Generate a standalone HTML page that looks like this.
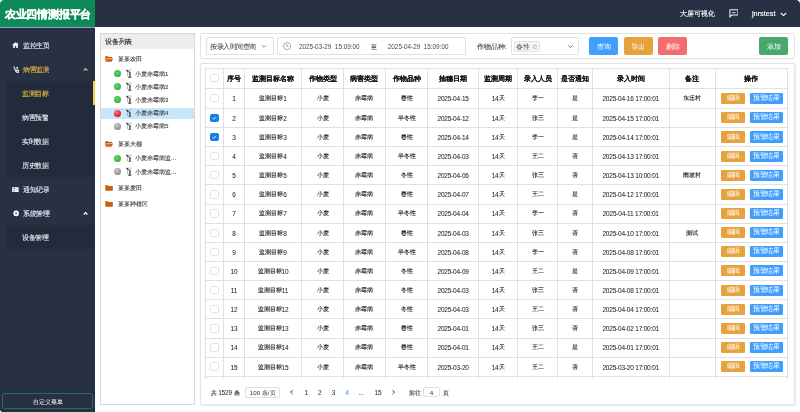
<!DOCTYPE html>
<html><head><meta charset="utf-8">
<style>
*{margin:0;padding:0;box-sizing:border-box}
html,body{width:800px;height:412px;overflow:hidden;background:#fff;-webkit-font-smoothing:antialiased;will-change:transform;font-family:"Liberation Sans",sans-serif;position:relative}
.a{position:absolute}
#hdr{left:0;top:0;width:800px;height:26.5px;background:#283044}
#logo{left:0;top:0;width:95px;height:26.5px;background:#0c8a5a;color:#fff;font-weight:bold;font-size:10.9px;line-height:28.2px;padding-left:4.8px;letter-spacing:-0.2px;white-space:nowrap;-webkit-text-stroke:0.3px #fff}
#side{left:0;top:27.5px;width:94.6px;height:385px;background:#283044}
.hline{left:0;top:26.5px;width:95px;height:1px;background:#9ca1b4}
.mi{position:absolute;left:0;width:94.6px;height:24px;line-height:24px;font-size:6.4px;color:#e3e6ee;white-space:nowrap}
.z{font-style:normal;display:inline-block;transform:scale(.25);white-space:nowrap;line-height:1}
.zl{position:absolute;transform:scale(.25);transform-origin:0 0;white-space:nowrap;font-style:normal}
.mi .t{position:absolute;left:23px;top:0;font-size:26.2px;line-height:96px;transform:scale(.25);transform-origin:0 0;-webkit-text-stroke:0.5px currentColor}
.mi.sub .t{left:22px}
.mi.y{color:#e3b944}
.subbg{position:absolute;left:6px;width:88.6px;background:#222a3c}
.chev{position:absolute;left:82.5px;top:9.1px;width:5.2px;height:5.2px}
.ico{position:absolute;left:12.5px;top:8.8px;width:6.5px;height:6.5px}
#cust{left:2px;top:393px;width:91px;height:16px;border:1px solid #1d7258;border-radius:2.5px;color:#fff;display:flex;align-items:center;justify-content:center;padding-top:1.6px}

/* device panel */
#dev{left:100.2px;top:33.2px;width:94.9px;height:371.8px;border:0.8px solid #d8d8d8;background:#fff}
#devh{left:0;top:0;width:100%;height:15.3px;background:#ededed}
.tn{position:absolute;left:0;width:100%;height:12px;font-size:6.1px;color:#3c3c3c;-webkit-text-stroke:0.1px #3c3c3c;white-space:nowrap}
.tn .t{position:absolute;top:0;line-height:48px;font-size:24.4px;-webkit-text-stroke:0.4px #3c3c3c;transform:scale(.25);transform-origin:0 0}
.dot{position:absolute;width:7.1px;height:7.1px;border-radius:50%;left:14.1px;top:2.45px}
.g{background:radial-gradient(circle at 45% 40%,#62d86c 0%,#3cbf48 50%,#22a030 85%,#1a7f26 100%)}
.r{background:radial-gradient(circle at 40% 35%,#ff8080 0%,#e8232b 55%,#b80f17 100%)}
.gr{background:radial-gradient(circle at 40% 35%,#cfcfcf 0%,#9a9a9a 55%,#777 100%)}
.sens{position:absolute;left:25.7px;top:1.6px;width:6px;height:8.7px}
.fold{position:absolute;left:4.6px;top:3px;width:8.4px;height:6px}

/* toolbar */
#tb{left:200.2px;top:33.3px;width:594.9px;height:25.8px;border:0.8px solid #e2e2e2;border-radius:1.5px;background:#fff}
.inp{position:absolute;border:0.7px solid #e0e0e0;border-radius:2px;background:#fff;font-size:6.4px;color:#606266;white-space:nowrap}
.btn2{position:absolute;top:36.7px;height:18px;width:29.3px;border-radius:2px;color:#fff;display:flex;align-items:center;justify-content:center;padding-top:1.3px}
.btn2 .z{font-size:27px}

/* table panel */
#tp{left:200.2px;top:63.3px;width:594.9px;height:341.6px;border:0.8px solid #e4e4e4;border-radius:2px;background:#fff;box-shadow:0.5px 0.5px 1.5px rgba(0,0,0,0.08)}
.hl{position:absolute;height:0.8px;background:#e0e0e0}
.vl{position:absolute;width:0.8px;background:#e0e0e0}
.th{position:absolute;text-align:center;font-weight:bold;font-size:6.55px;color:#111;-webkit-text-stroke:0.08px #111;white-space:nowrap;display:flex;align-items:center;justify-content:center;padding-top:1.9px}
.td{position:absolute;text-align:center;font-size:6px;color:#1e1e1e;-webkit-text-stroke:0.12px #1e1e1e;white-space:nowrap;display:flex;align-items:center;justify-content:center;padding-top:0.8px}
.n{font-weight:normal;font-size:6.5px;letter-spacing:-0.2px;-webkit-text-stroke:0.04px #1e1e1e}
.cb{position:absolute;width:8.3px;height:8.3px;border:0.7px solid #e2e2e2;border-radius:1.6px;background:#fff}
.cb.on{background:#1a7ef2;border-color:#1a7ef2}
.cb svg{display:block}
.btn{position:absolute;height:11.1px;color:#fff;border-radius:1.3px;display:flex;align-items:center;justify-content:center;padding-bottom:0.8px}
.btn .z{font-size:26px}
.be{width:23.7px;background:#e6a23c}
.bw{width:33.5px;background:#409eff}

/* pagination */
.pg{position:absolute;font-size:6.1px;color:#303133;-webkit-text-stroke:0.1px #303133;white-space:nowrap;line-height:10px}
</style></head><body>
<div id="hdr" class="a"></div>
<div id="logo" class="a">农业四情测报平台</div>
<div class="a hline"></div>
<div id="side" class="a"></div>
<div class="a" style="left:679.7px;top:8.8px;font-size:6.9px;color:#fff;line-height:10px;white-space:nowrap;-webkit-text-stroke:0.1px #fff">大屏可视化</div>
<svg class="a" style="left:728.6px;top:9.2px" width="9.6" height="8.6" viewBox="0 0 19 17"><path d="M3 1.5 H16.5 Q17.8 1.5 17.8 2.8 V10.7 Q17.8 12 16.5 12 H5.5 L1.8 15.6 V2.8 Q1.8 1.5 3 1.5 Z" fill="none" stroke="#f0f0f0" stroke-width="2"/><path d="M6.2 7 H13" stroke="#c8ccd4" stroke-width="2.2"/></svg>
<div class="a" style="left:752px;top:8.9px;font-size:7.3px;color:#fff;line-height:10px;white-space:nowrap;-webkit-text-stroke:0.15px #fff">jnrstest</div>
<svg class="a" style="left:779.5px;top:11.6px" width="7" height="4.8" viewBox="0 0 13 9"><path d="M1.5 1.5 L6.5 6.8 L11.5 1.5" fill="none" stroke="#fff" stroke-width="2.2"/></svg>

<!-- sidebar menu -->
<div class="subbg" style="top:81.2px;height:95.9px"></div>
<div class="subbg" style="top:225.2px;height:24.2px"></div>
<div class="a" style="left:93.3px;top:81px;width:1.7px;height:23.8px;background:#f3d443"></div>

<div class="mi" style="top:33.8px"><svg class="a" style="left:12.2px;top:8.5px" width="7" height="6" viewBox="0 0 14 12"><path d="M7 0.3 L13.8 6.2 H11.6 V11.8 H8.4 V8.2 H5.6 V11.8 H2.4 V6.2 H0.2 Z M9.8 1.2 H11.6 V3.6 L9.8 2.2 Z" fill="#fff"/></svg><span class="t">监控主页</span></div>
<div class="mi y" style="top:57.8px"><svg class="a" style="left:12.5px;top:8.1px" width="6.5" height="7" viewBox="0 0 13 14"><path d="M0.6 1.6 L2.6 0.4 L7.2 10.8 L5 12 Z" fill="#e8e8e8"/><circle cx="8.4" cy="3.4" r="1.7" fill="#fff"/><path d="M7 4.6 L8 9" stroke="#ccc" stroke-width="1.2"/><rect x="6.6" y="7.4" width="6" height="6.2" fill="#fff"/><circle cx="9.4" cy="10.4" r="1.3" fill="#283044"/></svg><span class="t">病害监测</span><svg class="chev" viewBox="0 0 10 10"><path d="M1.5 6.8 L5 3.2 L8.5 6.8" fill="none" stroke="#e3b944" stroke-width="2.4"/></svg></div>
<div class="mi sub y" style="top:81.8px"><span class="t">监测目标</span></div>
<div class="mi sub" style="top:105.8px"><span class="t">病害预警</span></div>
<div class="mi sub" style="top:129.8px"><span class="t">实时数据</span></div>
<div class="mi sub" style="top:153.8px"><span class="t">历史数据</span></div>
<div class="mi" style="top:177.8px"><svg class="a" style="left:12.3px;top:8.9px" width="6.8" height="5.3" viewBox="0 0 14 11"><rect x="0.3" y="0.3" width="13.4" height="10.4" rx="0.6" fill="#fff"/><circle cx="4.6" cy="3.8" r="1.5" fill="#283044"/><path d="M2.2 8.6 Q4.6 5.6 7 8.6 Z" fill="#283044"/><ellipse cx="10.4" cy="5.4" rx="1.1" ry="1.9" fill="#8a90a0"/></svg><span class="t">通知记录</span></div>
<div class="mi" style="top:201.8px"><svg class="a" style="left:12.8px;top:8.3px" width="6.3" height="6.7" viewBox="0 0 12.6 13.4"><path d="M6.3 0.2 L8 1.8 L10.6 1.5 L10.9 4.1 L12.4 6.7 L10.9 9.3 L10.6 11.9 L8 11.6 L6.3 13.2 L4.6 11.6 L2 11.9 L1.7 9.3 L0.2 6.7 L1.7 4.1 L2 1.5 L4.6 1.8 Z" fill="#fff"/><circle cx="6.3" cy="6.7" r="2" fill="#5a6070"/></svg><span class="t">系统管理</span><svg class="chev" viewBox="0 0 10 10"><path d="M1.5 6.8 L5 3.2 L8.5 6.8" fill="none" stroke="#fff" stroke-width="2.4"/></svg></div>
<div class="mi sub" style="top:225.8px"><span class="t">设备管理</span></div>
<div id="cust" class="a"><i class="z" style="font-size:24.2px">自定义菜单</i></div>

<!-- device panel -->
<div id="dev" class="a">
  <div id="devh" class="a"><span class="zl" style="left:4.2px;top:0;font-size:26.8px;line-height:61.2px;color:#222;-webkit-text-stroke:0.4px #222">设备列表</span></div>
</div>
<div class="tn" style="left:100.2px;width:94px;top:53.3px"><svg class="fold" viewBox="0 0 17 12"><path d="M0.5 1.2 Q0.5 0.3 1.4 0.3 H5.8 L7.2 1.8 H13.6 Q14.5 1.8 14.5 2.7 V4.2 H3.6 L0.5 11 Z" fill="#bf5208"/><path d="M3.9 5 H16.6 L13.4 11.6 H0.8 Z" fill="#d2661a"/></svg><span class="t" style="left:17.6px;font-size:24.4px">某某农田</span></div>
<div class="tn" style="left:100.2px;width:94px;top:67.6px"><div class="dot g"></div><svg class="sens" viewBox="0 0 12 17"><path d="M4 2 H11.5" stroke="#aaa" stroke-width="1.6"/><path d="M1 1.6 L2.5 3.2 L5 6" stroke="#111" stroke-width="2.2" fill="none"/><path d="M3.2 6.5 Q1.2 10 3.4 14" stroke="#999" stroke-width="1.5" fill="none"/><path d="M7.8 5.5 V14.5" stroke="#111" stroke-width="2.2"/><path d="M4.5 16 H10.5" stroke="#111" stroke-width="2.2"/></svg><span class="t" style="left:34.7px">小麦赤霉病1</span></div>
<div class="tn" style="left:100.2px;width:94px;top:80.8px"><div class="dot g"></div><svg class="sens" viewBox="0 0 12 17"><path d="M4 2 H11.5" stroke="#aaa" stroke-width="1.6"/><path d="M1 1.6 L2.5 3.2 L5 6" stroke="#111" stroke-width="2.2" fill="none"/><path d="M3.2 6.5 Q1.2 10 3.4 14" stroke="#999" stroke-width="1.5" fill="none"/><path d="M7.8 5.5 V14.5" stroke="#111" stroke-width="2.2"/><path d="M4.5 16 H10.5" stroke="#111" stroke-width="2.2"/></svg><span class="t" style="left:34.7px">小麦赤霉病2</span></div>
<div class="tn" style="left:100.2px;width:94px;top:93.9px"><div class="dot g"></div><svg class="sens" viewBox="0 0 12 17"><path d="M4 2 H11.5" stroke="#aaa" stroke-width="1.6"/><path d="M1 1.6 L2.5 3.2 L5 6" stroke="#111" stroke-width="2.2" fill="none"/><path d="M3.2 6.5 Q1.2 10 3.4 14" stroke="#999" stroke-width="1.5" fill="none"/><path d="M7.8 5.5 V14.5" stroke="#111" stroke-width="2.2"/><path d="M4.5 16 H10.5" stroke="#111" stroke-width="2.2"/></svg><span class="t" style="left:34.7px">小麦赤霉病3</span></div>
<div class="a" style="left:100.9px;top:107.6px;width:93px;height:11.5px;background:#c6e7fa"></div>
<div class="tn" style="left:100.2px;width:94px;top:107.2px"><div class="dot r"></div><svg class="sens" viewBox="0 0 12 17"><path d="M4 2 H11.5" stroke="#aaa" stroke-width="1.6"/><path d="M1 1.6 L2.5 3.2 L5 6" stroke="#111" stroke-width="2.2" fill="none"/><path d="M3.2 6.5 Q1.2 10 3.4 14" stroke="#999" stroke-width="1.5" fill="none"/><path d="M7.8 5.5 V14.5" stroke="#111" stroke-width="2.2"/><path d="M4.5 16 H10.5" stroke="#111" stroke-width="2.2"/></svg><span class="t" style="left:34.7px">小麦赤霉病4</span></div>
<div class="tn" style="left:100.2px;width:94px;top:120.2px"><div class="dot gr"></div><svg class="sens" viewBox="0 0 12 17"><path d="M4 2 H11.5" stroke="#aaa" stroke-width="1.6"/><path d="M1 1.6 L2.5 3.2 L5 6" stroke="#111" stroke-width="2.2" fill="none"/><path d="M3.2 6.5 Q1.2 10 3.4 14" stroke="#999" stroke-width="1.5" fill="none"/><path d="M7.8 5.5 V14.5" stroke="#111" stroke-width="2.2"/><path d="M4.5 16 H10.5" stroke="#111" stroke-width="2.2"/></svg><span class="t" style="left:34.7px">小麦赤霉病5</span></div>
<div class="tn" style="left:100.2px;width:94px;top:138px"><svg class="fold" viewBox="0 0 17 12"><path d="M0.5 1.2 Q0.5 0.3 1.4 0.3 H5.8 L7.2 1.8 H13.6 Q14.5 1.8 14.5 2.7 V4.2 H3.6 L0.5 11 Z" fill="#bf5208"/><path d="M3.9 5 H16.6 L13.4 11.6 H0.8 Z" fill="#d2661a"/></svg><span class="t" style="left:17.6px;font-size:24.4px">某某大棚</span></div>
<div class="tn" style="left:100.2px;width:94px;top:152.1px"><div class="dot g"></div><svg class="sens" viewBox="0 0 12 17"><path d="M4 2 H11.5" stroke="#aaa" stroke-width="1.6"/><path d="M1 1.6 L2.5 3.2 L5 6" stroke="#111" stroke-width="2.2" fill="none"/><path d="M3.2 6.5 Q1.2 10 3.4 14" stroke="#999" stroke-width="1.5" fill="none"/><path d="M7.8 5.5 V14.5" stroke="#111" stroke-width="2.2"/><path d="M4.5 16 H10.5" stroke="#111" stroke-width="2.2"/></svg><span class="t" style="left:34.7px">小麦赤霉病监...</span></div>
<div class="tn" style="left:100.2px;width:94px;top:165.5px"><div class="dot gr"></div><svg class="sens" viewBox="0 0 12 17"><path d="M4 2 H11.5" stroke="#aaa" stroke-width="1.6"/><path d="M1 1.6 L2.5 3.2 L5 6" stroke="#111" stroke-width="2.2" fill="none"/><path d="M3.2 6.5 Q1.2 10 3.4 14" stroke="#999" stroke-width="1.5" fill="none"/><path d="M7.8 5.5 V14.5" stroke="#111" stroke-width="2.2"/><path d="M4.5 16 H10.5" stroke="#111" stroke-width="2.2"/></svg><span class="t" style="left:34.7px">小麦赤霉病监...</span></div>
<div class="tn" style="left:100.2px;width:94px;top:182px"><svg class="fold" viewBox="0 0 17 12"><path d="M0.6 1.2 Q0.6 0.3 1.5 0.3 H6 L7.5 1.9 H15 Q15.9 1.9 15.9 2.8 V10.8 Q15.9 11.7 15 11.7 H1.5 Q0.6 11.7 0.6 10.8 Z" fill="#cc5e0c"/></svg><span class="t" style="left:17.6px;font-size:24.4px">某某麦田</span></div>
<div class="tn" style="left:100.2px;width:94px;top:198px"><svg class="fold" viewBox="0 0 17 12"><path d="M0.6 1.2 Q0.6 0.3 1.5 0.3 H6 L7.5 1.9 H15 Q15.9 1.9 15.9 2.8 V10.8 Q15.9 11.7 15 11.7 H1.5 Q0.6 11.7 0.6 10.8 Z" fill="#cc5e0c"/></svg><span class="t" style="left:17.6px;font-size:24.4px">某某种植区</span></div>

<!-- toolbar -->
<div id="tb" class="a"></div>
<div class="inp" style="left:205.6px;top:36.5px;width:68.2px;height:18px"><span class="zl" style="left:3.9px;top:0;line-height:70px;font-size:26.4px;color:#4a4a4a;-webkit-text-stroke:0.3px #4a4a4a">按录入时间查询</span><svg class="a" style="left:55.9px;top:7.6px" width="4.2" height="2.8" viewBox="0 0 8 5"><path d="M0.5 0.5 L4 4 L7.5 0.5" fill="none" stroke="#555" stroke-width="1.3"/></svg></div>
<div class="inp" style="left:277.3px;top:36.5px;width:188.5px;height:18.1px">
  <svg class="a" style="left:4.9px;top:4.8px" width="8.2" height="8.2" viewBox="0 0 16 16"><circle cx="8" cy="8" r="7" fill="none" stroke="#8a8d94" stroke-width="1.4"/><path d="M7.6 3.8 V8.4 H11" fill="none" stroke="#8a8d94" stroke-width="1.5"/></svg>
  <span class="a" style="left:20.6px;top:0;line-height:17px;font-size:6.35px;color:#4a4a4a">2025-03-29&nbsp; 15:09:00</span>
  <span class="a" style="left:92.4px;top:0;line-height:17px;font-size:6.2px;color:#444;-webkit-text-stroke:0.1px #444">至</span>
  <span class="a" style="left:109.5px;top:0;line-height:17px;font-size:6.35px;color:#4a4a4a">2025-04-29&nbsp; 15:09:00</span>
</div>
<div class="a" style="left:476.5px;top:41.5px;font-size:6.5px;line-height:10px;color:#444;white-space:nowrap;-webkit-text-stroke:0.08px #444">作物品种:</div>
<div class="inp" style="left:511.3px;top:36.5px;width:67.4px;height:18.1px">
  <div class="a" style="left:2.2px;top:3.8px;width:25.9px;height:11px;background:#f6f6f7;border:0.6px solid #e2e2e4;border-radius:1.5px"></div>
  <span class="zl" style="left:4px;top:0.6px;line-height:68px;font-size:27px;color:#555">春性</span>
  <svg class="a" style="left:19.6px;top:6.6px" width="5.6" height="5.6" viewBox="0 0 10 10"><circle cx="5" cy="5" r="4.6" fill="#cdd1d8"/><path d="M3.2 3.2 L6.8 6.8 M6.8 3.2 L3.2 6.8" stroke="#fff" stroke-width="1.1"/></svg>
  <svg class="a" style="left:55.4px;top:7.4px" width="5.2" height="3.2" viewBox="0 0 8 5"><path d="M0.5 0.5 L4 4 L7.5 0.5" fill="none" stroke="#555" stroke-width="1.3"/></svg>
</div>
<div class="btn2" style="left:589px;background:#409eff"><i class="z">查询</i></div>
<div class="btn2" style="left:623.6px;background:#e6a23c"><i class="z">导出</i></div>
<div class="btn2" style="left:658px;background:#f56c6c"><i class="z">删除</i></div>
<div class="btn2" style="left:759.1px;background:#46a96b"><i class="z">添加</i></div>

<!-- table panel -->
<div id="tp" class="a"></div>
<div class="hl" style="left:205.6px;top:67.85px;width:581.9px"></div>
<div class="hl" style="left:205.6px;top:87.9px;width:581.9px"></div>
<div class="hl" style="left:205.6px;top:107.85px;width:581.9px"></div>
<div class="hl" style="left:205.6px;top:126.99px;width:581.9px"></div>
<div class="hl" style="left:205.6px;top:146.13px;width:581.9px"></div>
<div class="hl" style="left:205.6px;top:165.27px;width:581.9px"></div>
<div class="hl" style="left:205.6px;top:184.41px;width:581.9px"></div>
<div class="hl" style="left:205.6px;top:203.55px;width:581.9px"></div>
<div class="hl" style="left:205.6px;top:222.69px;width:581.9px"></div>
<div class="hl" style="left:205.6px;top:241.83px;width:581.9px"></div>
<div class="hl" style="left:205.6px;top:260.97px;width:581.9px"></div>
<div class="hl" style="left:205.6px;top:280.11px;width:581.9px"></div>
<div class="hl" style="left:205.6px;top:299.25px;width:581.9px"></div>
<div class="hl" style="left:205.6px;top:318.39px;width:581.9px"></div>
<div class="hl" style="left:205.6px;top:337.53px;width:581.9px"></div>
<div class="hl" style="left:205.6px;top:356.67px;width:581.9px"></div>
<div class="hl" style="left:205.6px;top:375.81px;width:581.9px"></div>
<div class="vl" style="left:205.2px;top:67.85px;height:311.15px"></div>
<div class="vl" style="left:223.2px;top:67.85px;height:311.15px"></div>
<div class="vl" style="left:243.8px;top:67.85px;height:311.15px"></div>
<div class="vl" style="left:301.35px;top:67.85px;height:311.15px"></div>
<div class="vl" style="left:342.85px;top:67.85px;height:311.15px"></div>
<div class="vl" style="left:385.1px;top:67.85px;height:311.15px"></div>
<div class="vl" style="left:427.1px;top:67.85px;height:311.15px"></div>
<div class="vl" style="left:478.35px;top:67.85px;height:311.15px"></div>
<div class="vl" style="left:517.1px;top:67.85px;height:311.15px"></div>
<div class="vl" style="left:557.1px;top:67.85px;height:311.15px"></div>
<div class="vl" style="left:591.5px;top:67.85px;height:311.15px"></div>
<div class="vl" style="left:669.1px;top:67.85px;height:311.15px"></div>
<div class="vl" style="left:715px;top:67.85px;height:311.15px"></div>
<div class="vl" style="left:787.1px;top:67.85px;height:311.15px"></div>
<div class="cb" style="left:210.45px;top:74.12px"></div>
<div class="th" style="left:223.6px;top:68.25px;width:20.6px;height:20.05px">序号</div>
<div class="th" style="left:244.2px;top:68.25px;width:57.55px;height:20.05px">监测目标名称</div>
<div class="th" style="left:301.75px;top:68.25px;width:41.5px;height:20.05px">作物类型</div>
<div class="th" style="left:343.25px;top:68.25px;width:42.25px;height:20.05px">病害类型</div>
<div class="th" style="left:385.5px;top:68.25px;width:42px;height:20.05px">作物品种</div>
<div class="th" style="left:427.5px;top:68.25px;width:51.25px;height:20.05px">抽穗日期</div>
<div class="th" style="left:478.75px;top:68.25px;width:38.75px;height:20.05px">监测周期</div>
<div class="th" style="left:517.5px;top:68.25px;width:40px;height:20.05px">录入人员</div>
<div class="th" style="left:557.5px;top:68.25px;width:34.4px;height:20.05px">是否通知</div>
<div class="th" style="left:591.9px;top:68.25px;width:77.6px;height:20.05px">录入时间</div>
<div class="th" style="left:669.5px;top:68.25px;width:45.9px;height:20.05px">备注</div>
<div class="th" style="left:715.4px;top:68.25px;width:72.1px;height:20.05px">操作</div>
<div class="cb" style="left:210.45px;top:94.12px"></div>
<div class="td" style="left:223.6px;top:88.3px;width:20.6px;height:19.95px"><b class="n">1</b></div>
<div class="td" style="left:244.2px;top:88.3px;width:57.55px;height:19.95px">监测目标<b class="n">1</b></div>
<div class="td" style="left:301.75px;top:88.3px;width:41.5px;height:19.95px">小麦</div>
<div class="td" style="left:343.25px;top:88.3px;width:42.25px;height:19.95px">赤霉病</div>
<div class="td" style="left:385.5px;top:88.3px;width:42px;height:19.95px">春性</div>
<div class="td" style="left:427.5px;top:88.3px;width:51.25px;height:19.95px"><b class="n">2025-04-15</b></div>
<div class="td" style="left:478.75px;top:88.3px;width:38.75px;height:19.95px"><b class="n">14</b>天</div>
<div class="td" style="left:517.5px;top:88.3px;width:40px;height:19.95px">李一</div>
<div class="td" style="left:557.5px;top:88.3px;width:34.4px;height:19.95px">是</div>
<div class="td" style="left:591.9px;top:88.3px;width:77.6px;height:19.95px"><b class="n">2025-04-16 17:00:01</b></div>
<div class="td" style="left:669.5px;top:88.3px;width:45.9px;height:19.95px">东庄村</div>
<div class="btn be" style="left:721.25px;top:92.73px"><i class="z">编辑</i></div>
<div class="btn bw" style="left:749.5px;top:92.73px"><i class="z">预警结果</i></div>
<div class="cb on" style="left:210.45px;top:113.67px"><svg viewBox="0 0 8 8" width="100%" height="100%"><path d="M2 4.2 L3.4 5.5 L6 2.6" stroke="#fff" stroke-width="1.1" fill="none"/></svg></div>
<div class="td" style="left:223.6px;top:108.25px;width:20.6px;height:19.14px"><b class="n">2</b></div>
<div class="td" style="left:244.2px;top:108.25px;width:57.55px;height:19.14px">监测目标<b class="n">2</b></div>
<div class="td" style="left:301.75px;top:108.25px;width:41.5px;height:19.14px">小麦</div>
<div class="td" style="left:343.25px;top:108.25px;width:42.25px;height:19.14px">赤霉病</div>
<div class="td" style="left:385.5px;top:108.25px;width:42px;height:19.14px">半冬性</div>
<div class="td" style="left:427.5px;top:108.25px;width:51.25px;height:19.14px"><b class="n">2025-04-12</b></div>
<div class="td" style="left:478.75px;top:108.25px;width:38.75px;height:19.14px"><b class="n">14</b>天</div>
<div class="td" style="left:517.5px;top:108.25px;width:40px;height:19.14px">张三</div>
<div class="td" style="left:557.5px;top:108.25px;width:34.4px;height:19.14px">是</div>
<div class="td" style="left:591.9px;top:108.25px;width:77.6px;height:19.14px"><b class="n">2025-04-15 17:00:01</b></div>
<div class="btn be" style="left:721.25px;top:112.27px"><i class="z">编辑</i></div>
<div class="btn bw" style="left:749.5px;top:112.27px"><i class="z">预警结果</i></div>
<div class="cb on" style="left:210.45px;top:132.81px"><svg viewBox="0 0 8 8" width="100%" height="100%"><path d="M2 4.2 L3.4 5.5 L6 2.6" stroke="#fff" stroke-width="1.1" fill="none"/></svg></div>
<div class="td" style="left:223.6px;top:127.39px;width:20.6px;height:19.14px"><b class="n">3</b></div>
<div class="td" style="left:244.2px;top:127.39px;width:57.55px;height:19.14px">监测目标<b class="n">3</b></div>
<div class="td" style="left:301.75px;top:127.39px;width:41.5px;height:19.14px">小麦</div>
<div class="td" style="left:343.25px;top:127.39px;width:42.25px;height:19.14px">赤霉病</div>
<div class="td" style="left:385.5px;top:127.39px;width:42px;height:19.14px">春性</div>
<div class="td" style="left:427.5px;top:127.39px;width:51.25px;height:19.14px"><b class="n">2025-04-14</b></div>
<div class="td" style="left:478.75px;top:127.39px;width:38.75px;height:19.14px"><b class="n">14</b>天</div>
<div class="td" style="left:517.5px;top:127.39px;width:40px;height:19.14px">李一</div>
<div class="td" style="left:557.5px;top:127.39px;width:34.4px;height:19.14px">是</div>
<div class="td" style="left:591.9px;top:127.39px;width:77.6px;height:19.14px"><b class="n">2025-04-14 17:00:01</b></div>
<div class="btn be" style="left:721.25px;top:131.41px"><i class="z">编辑</i></div>
<div class="btn bw" style="left:749.5px;top:131.41px"><i class="z">预警结果</i></div>
<div class="cb" style="left:210.45px;top:151.95px"></div>
<div class="td" style="left:223.6px;top:146.53px;width:20.6px;height:19.14px"><b class="n">4</b></div>
<div class="td" style="left:244.2px;top:146.53px;width:57.55px;height:19.14px">监测目标<b class="n">4</b></div>
<div class="td" style="left:301.75px;top:146.53px;width:41.5px;height:19.14px">小麦</div>
<div class="td" style="left:343.25px;top:146.53px;width:42.25px;height:19.14px">赤霉病</div>
<div class="td" style="left:385.5px;top:146.53px;width:42px;height:19.14px">半冬性</div>
<div class="td" style="left:427.5px;top:146.53px;width:51.25px;height:19.14px"><b class="n">2025-04-03</b></div>
<div class="td" style="left:478.75px;top:146.53px;width:38.75px;height:19.14px"><b class="n">14</b>天</div>
<div class="td" style="left:517.5px;top:146.53px;width:40px;height:19.14px">王二</div>
<div class="td" style="left:557.5px;top:146.53px;width:34.4px;height:19.14px">否</div>
<div class="td" style="left:591.9px;top:146.53px;width:77.6px;height:19.14px"><b class="n">2025-04-13 17:00:01</b></div>
<div class="btn be" style="left:721.25px;top:150.55px"><i class="z">编辑</i></div>
<div class="btn bw" style="left:749.5px;top:150.55px"><i class="z">预警结果</i></div>
<div class="cb" style="left:210.45px;top:171.09px"></div>
<div class="td" style="left:223.6px;top:165.67px;width:20.6px;height:19.14px"><b class="n">5</b></div>
<div class="td" style="left:244.2px;top:165.67px;width:57.55px;height:19.14px">监测目标<b class="n">5</b></div>
<div class="td" style="left:301.75px;top:165.67px;width:41.5px;height:19.14px">小麦</div>
<div class="td" style="left:343.25px;top:165.67px;width:42.25px;height:19.14px">赤霉病</div>
<div class="td" style="left:385.5px;top:165.67px;width:42px;height:19.14px">冬性</div>
<div class="td" style="left:427.5px;top:165.67px;width:51.25px;height:19.14px"><b class="n">2025-04-06</b></div>
<div class="td" style="left:478.75px;top:165.67px;width:38.75px;height:19.14px"><b class="n">14</b>天</div>
<div class="td" style="left:517.5px;top:165.67px;width:40px;height:19.14px">张三</div>
<div class="td" style="left:557.5px;top:165.67px;width:34.4px;height:19.14px">否</div>
<div class="td" style="left:591.9px;top:165.67px;width:77.6px;height:19.14px"><b class="n">2025-04-13 10:00:01</b></div>
<div class="td" style="left:669.5px;top:165.67px;width:45.9px;height:19.14px">南坡村</div>
<div class="btn be" style="left:721.25px;top:169.69px"><i class="z">编辑</i></div>
<div class="btn bw" style="left:749.5px;top:169.69px"><i class="z">预警结果</i></div>
<div class="cb" style="left:210.45px;top:190.23px"></div>
<div class="td" style="left:223.6px;top:184.81px;width:20.6px;height:19.14px"><b class="n">6</b></div>
<div class="td" style="left:244.2px;top:184.81px;width:57.55px;height:19.14px">监测目标<b class="n">6</b></div>
<div class="td" style="left:301.75px;top:184.81px;width:41.5px;height:19.14px">小麦</div>
<div class="td" style="left:343.25px;top:184.81px;width:42.25px;height:19.14px">赤霉病</div>
<div class="td" style="left:385.5px;top:184.81px;width:42px;height:19.14px">春性</div>
<div class="td" style="left:427.5px;top:184.81px;width:51.25px;height:19.14px"><b class="n">2025-04-07</b></div>
<div class="td" style="left:478.75px;top:184.81px;width:38.75px;height:19.14px"><b class="n">14</b>天</div>
<div class="td" style="left:517.5px;top:184.81px;width:40px;height:19.14px">王二</div>
<div class="td" style="left:557.5px;top:184.81px;width:34.4px;height:19.14px">是</div>
<div class="td" style="left:591.9px;top:184.81px;width:77.6px;height:19.14px"><b class="n">2025-04-12 17:00:01</b></div>
<div class="btn be" style="left:721.25px;top:188.83px"><i class="z">编辑</i></div>
<div class="btn bw" style="left:749.5px;top:188.83px"><i class="z">预警结果</i></div>
<div class="cb" style="left:210.45px;top:209.37px"></div>
<div class="td" style="left:223.6px;top:203.95px;width:20.6px;height:19.14px"><b class="n">7</b></div>
<div class="td" style="left:244.2px;top:203.95px;width:57.55px;height:19.14px">监测目标<b class="n">7</b></div>
<div class="td" style="left:301.75px;top:203.95px;width:41.5px;height:19.14px">小麦</div>
<div class="td" style="left:343.25px;top:203.95px;width:42.25px;height:19.14px">赤霉病</div>
<div class="td" style="left:385.5px;top:203.95px;width:42px;height:19.14px">半冬性</div>
<div class="td" style="left:427.5px;top:203.95px;width:51.25px;height:19.14px"><b class="n">2025-04-04</b></div>
<div class="td" style="left:478.75px;top:203.95px;width:38.75px;height:19.14px"><b class="n">14</b>天</div>
<div class="td" style="left:517.5px;top:203.95px;width:40px;height:19.14px">李一</div>
<div class="td" style="left:557.5px;top:203.95px;width:34.4px;height:19.14px">否</div>
<div class="td" style="left:591.9px;top:203.95px;width:77.6px;height:19.14px"><b class="n">2025-04-11 17:00:01</b></div>
<div class="btn be" style="left:721.25px;top:207.97px"><i class="z">编辑</i></div>
<div class="btn bw" style="left:749.5px;top:207.97px"><i class="z">预警结果</i></div>
<div class="cb" style="left:210.45px;top:228.51px"></div>
<div class="td" style="left:223.6px;top:223.09px;width:20.6px;height:19.14px"><b class="n">8</b></div>
<div class="td" style="left:244.2px;top:223.09px;width:57.55px;height:19.14px">监测目标<b class="n">8</b></div>
<div class="td" style="left:301.75px;top:223.09px;width:41.5px;height:19.14px">小麦</div>
<div class="td" style="left:343.25px;top:223.09px;width:42.25px;height:19.14px">赤霉病</div>
<div class="td" style="left:385.5px;top:223.09px;width:42px;height:19.14px">春性</div>
<div class="td" style="left:427.5px;top:223.09px;width:51.25px;height:19.14px"><b class="n">2025-04-03</b></div>
<div class="td" style="left:478.75px;top:223.09px;width:38.75px;height:19.14px"><b class="n">14</b>天</div>
<div class="td" style="left:517.5px;top:223.09px;width:40px;height:19.14px">张三</div>
<div class="td" style="left:557.5px;top:223.09px;width:34.4px;height:19.14px">否</div>
<div class="td" style="left:591.9px;top:223.09px;width:77.6px;height:19.14px"><b class="n">2025-04-10 17:00:01</b></div>
<div class="td" style="left:669.5px;top:223.09px;width:45.9px;height:19.14px">测试</div>
<div class="btn be" style="left:721.25px;top:227.11px"><i class="z">编辑</i></div>
<div class="btn bw" style="left:749.5px;top:227.11px"><i class="z">预警结果</i></div>
<div class="cb" style="left:210.45px;top:247.65px"></div>
<div class="td" style="left:223.6px;top:242.23px;width:20.6px;height:19.14px"><b class="n">9</b></div>
<div class="td" style="left:244.2px;top:242.23px;width:57.55px;height:19.14px">监测目标<b class="n">9</b></div>
<div class="td" style="left:301.75px;top:242.23px;width:41.5px;height:19.14px">小麦</div>
<div class="td" style="left:343.25px;top:242.23px;width:42.25px;height:19.14px">赤霉病</div>
<div class="td" style="left:385.5px;top:242.23px;width:42px;height:19.14px">半冬性</div>
<div class="td" style="left:427.5px;top:242.23px;width:51.25px;height:19.14px"><b class="n">2025-04-08</b></div>
<div class="td" style="left:478.75px;top:242.23px;width:38.75px;height:19.14px"><b class="n">14</b>天</div>
<div class="td" style="left:517.5px;top:242.23px;width:40px;height:19.14px">李一</div>
<div class="td" style="left:557.5px;top:242.23px;width:34.4px;height:19.14px">否</div>
<div class="td" style="left:591.9px;top:242.23px;width:77.6px;height:19.14px"><b class="n">2025-04-08 17:00:01</b></div>
<div class="btn be" style="left:721.25px;top:246.25px"><i class="z">编辑</i></div>
<div class="btn bw" style="left:749.5px;top:246.25px"><i class="z">预警结果</i></div>
<div class="cb" style="left:210.45px;top:266.79px"></div>
<div class="td" style="left:223.6px;top:261.37px;width:20.6px;height:19.14px"><b class="n">10</b></div>
<div class="td" style="left:244.2px;top:261.37px;width:57.55px;height:19.14px">监测目标<b class="n">10</b></div>
<div class="td" style="left:301.75px;top:261.37px;width:41.5px;height:19.14px">小麦</div>
<div class="td" style="left:343.25px;top:261.37px;width:42.25px;height:19.14px">赤霉病</div>
<div class="td" style="left:385.5px;top:261.37px;width:42px;height:19.14px">冬性</div>
<div class="td" style="left:427.5px;top:261.37px;width:51.25px;height:19.14px"><b class="n">2025-04-09</b></div>
<div class="td" style="left:478.75px;top:261.37px;width:38.75px;height:19.14px"><b class="n">14</b>天</div>
<div class="td" style="left:517.5px;top:261.37px;width:40px;height:19.14px">王二</div>
<div class="td" style="left:557.5px;top:261.37px;width:34.4px;height:19.14px">是</div>
<div class="td" style="left:591.9px;top:261.37px;width:77.6px;height:19.14px"><b class="n">2025-04-09 17:00:01</b></div>
<div class="btn be" style="left:721.25px;top:265.39px"><i class="z">编辑</i></div>
<div class="btn bw" style="left:749.5px;top:265.39px"><i class="z">预警结果</i></div>
<div class="cb" style="left:210.45px;top:285.93px"></div>
<div class="td" style="left:223.6px;top:280.51px;width:20.6px;height:19.14px"><b class="n">11</b></div>
<div class="td" style="left:244.2px;top:280.51px;width:57.55px;height:19.14px">监测目标<b class="n">11</b></div>
<div class="td" style="left:301.75px;top:280.51px;width:41.5px;height:19.14px">小麦</div>
<div class="td" style="left:343.25px;top:280.51px;width:42.25px;height:19.14px">赤霉病</div>
<div class="td" style="left:385.5px;top:280.51px;width:42px;height:19.14px">冬性</div>
<div class="td" style="left:427.5px;top:280.51px;width:51.25px;height:19.14px"><b class="n">2025-04-03</b></div>
<div class="td" style="left:478.75px;top:280.51px;width:38.75px;height:19.14px"><b class="n">14</b>天</div>
<div class="td" style="left:517.5px;top:280.51px;width:40px;height:19.14px">张三</div>
<div class="td" style="left:557.5px;top:280.51px;width:34.4px;height:19.14px">否</div>
<div class="td" style="left:591.9px;top:280.51px;width:77.6px;height:19.14px"><b class="n">2025-04-08 17:00:01</b></div>
<div class="btn be" style="left:721.25px;top:284.53px"><i class="z">编辑</i></div>
<div class="btn bw" style="left:749.5px;top:284.53px"><i class="z">预警结果</i></div>
<div class="cb" style="left:210.45px;top:305.07px"></div>
<div class="td" style="left:223.6px;top:299.65px;width:20.6px;height:19.14px"><b class="n">12</b></div>
<div class="td" style="left:244.2px;top:299.65px;width:57.55px;height:19.14px">监测目标<b class="n">12</b></div>
<div class="td" style="left:301.75px;top:299.65px;width:41.5px;height:19.14px">小麦</div>
<div class="td" style="left:343.25px;top:299.65px;width:42.25px;height:19.14px">赤霉病</div>
<div class="td" style="left:385.5px;top:299.65px;width:42px;height:19.14px">冬性</div>
<div class="td" style="left:427.5px;top:299.65px;width:51.25px;height:19.14px"><b class="n">2025-04-03</b></div>
<div class="td" style="left:478.75px;top:299.65px;width:38.75px;height:19.14px"><b class="n">14</b>天</div>
<div class="td" style="left:517.5px;top:299.65px;width:40px;height:19.14px">王二</div>
<div class="td" style="left:557.5px;top:299.65px;width:34.4px;height:19.14px">否</div>
<div class="td" style="left:591.9px;top:299.65px;width:77.6px;height:19.14px"><b class="n">2025-04-04 17:00:01</b></div>
<div class="btn be" style="left:721.25px;top:303.67px"><i class="z">编辑</i></div>
<div class="btn bw" style="left:749.5px;top:303.67px"><i class="z">预警结果</i></div>
<div class="cb" style="left:210.45px;top:324.21px"></div>
<div class="td" style="left:223.6px;top:318.79px;width:20.6px;height:19.14px"><b class="n">13</b></div>
<div class="td" style="left:244.2px;top:318.79px;width:57.55px;height:19.14px">监测目标<b class="n">13</b></div>
<div class="td" style="left:301.75px;top:318.79px;width:41.5px;height:19.14px">小麦</div>
<div class="td" style="left:343.25px;top:318.79px;width:42.25px;height:19.14px">赤霉病</div>
<div class="td" style="left:385.5px;top:318.79px;width:42px;height:19.14px">春性</div>
<div class="td" style="left:427.5px;top:318.79px;width:51.25px;height:19.14px"><b class="n">2025-04-01</b></div>
<div class="td" style="left:478.75px;top:318.79px;width:38.75px;height:19.14px"><b class="n">14</b>天</div>
<div class="td" style="left:517.5px;top:318.79px;width:40px;height:19.14px">张三</div>
<div class="td" style="left:557.5px;top:318.79px;width:34.4px;height:19.14px">否</div>
<div class="td" style="left:591.9px;top:318.79px;width:77.6px;height:19.14px"><b class="n">2025-04-02 17:00:01</b></div>
<div class="btn be" style="left:721.25px;top:322.81px"><i class="z">编辑</i></div>
<div class="btn bw" style="left:749.5px;top:322.81px"><i class="z">预警结果</i></div>
<div class="cb" style="left:210.45px;top:343.35px"></div>
<div class="td" style="left:223.6px;top:337.93px;width:20.6px;height:19.14px"><b class="n">14</b></div>
<div class="td" style="left:244.2px;top:337.93px;width:57.55px;height:19.14px">监测目标<b class="n">14</b></div>
<div class="td" style="left:301.75px;top:337.93px;width:41.5px;height:19.14px">小麦</div>
<div class="td" style="left:343.25px;top:337.93px;width:42.25px;height:19.14px">赤霉病</div>
<div class="td" style="left:385.5px;top:337.93px;width:42px;height:19.14px">春性</div>
<div class="td" style="left:427.5px;top:337.93px;width:51.25px;height:19.14px"><b class="n">2025-04-01</b></div>
<div class="td" style="left:478.75px;top:337.93px;width:38.75px;height:19.14px"><b class="n">14</b>天</div>
<div class="td" style="left:517.5px;top:337.93px;width:40px;height:19.14px">王二</div>
<div class="td" style="left:557.5px;top:337.93px;width:34.4px;height:19.14px">是</div>
<div class="td" style="left:591.9px;top:337.93px;width:77.6px;height:19.14px"><b class="n">2025-04-01 17:00:01</b></div>
<div class="btn be" style="left:721.25px;top:341.95px"><i class="z">编辑</i></div>
<div class="btn bw" style="left:749.5px;top:341.95px"><i class="z">预警结果</i></div>
<div class="cb" style="left:210.45px;top:362.49px"></div>
<div class="td" style="left:223.6px;top:357.07px;width:20.6px;height:19.14px"><b class="n">15</b></div>
<div class="td" style="left:244.2px;top:357.07px;width:57.55px;height:19.14px">监测目标<b class="n">15</b></div>
<div class="td" style="left:301.75px;top:357.07px;width:41.5px;height:19.14px">小麦</div>
<div class="td" style="left:343.25px;top:357.07px;width:42.25px;height:19.14px">赤霉病</div>
<div class="td" style="left:385.5px;top:357.07px;width:42px;height:19.14px">半冬性</div>
<div class="td" style="left:427.5px;top:357.07px;width:51.25px;height:19.14px"><b class="n">2025-03-20</b></div>
<div class="td" style="left:478.75px;top:357.07px;width:38.75px;height:19.14px"><b class="n">14</b>天</div>
<div class="td" style="left:517.5px;top:357.07px;width:40px;height:19.14px">王二</div>
<div class="td" style="left:557.5px;top:357.07px;width:34.4px;height:19.14px">否</div>
<div class="td" style="left:591.9px;top:357.07px;width:77.6px;height:19.14px"><b class="n">2025-03-20 17:00:01</b></div>
<div class="btn be" style="left:721.25px;top:361.09px"><i class="z">编辑</i></div>
<div class="btn bw" style="left:749.5px;top:361.09px"><i class="z">预警结果</i></div>

<!-- pagination -->
<div class="pg" style="left:210.5px;top:387.7px">共 <b class="n">1529</b> 条</div>
<div class="inp" style="left:245.4px;top:387.2px;width:34.5px;height:10.6px;font-size:6.2px;line-height:9.4px;text-align:center;color:#303133">100 条/页</div>
<svg class="a" style="left:290px;top:390.4px" width="3.2" height="4.4" viewBox="0 0 6 8"><path d="M5 0.5 L1.2 4 L5 7.5" fill="none" stroke="#222" stroke-width="1.7"/></svg>
<div class="pg" style="left:304.6px;top:387.7px"><b class="n">1</b></div>
<div class="pg" style="left:318.1px;top:387.7px"><b class="n">2</b></div>
<div class="pg" style="left:331.8px;top:387.7px"><b class="n">3</b></div>
<div class="pg" style="left:345.2px;top:387.7px;color:#409eff"><b class="n" style="-webkit-text-stroke:0.1px #409eff">4</b></div>
<div class="pg" style="left:358.5px;top:387.7px">...</div>
<div class="pg" style="left:374.6px;top:387.7px"><b class="n">15</b></div>
<svg class="a" style="left:391.5px;top:390.4px" width="3.2" height="4.4" viewBox="0 0 6 8"><path d="M1 0.5 L4.8 4 L1 7.5" fill="none" stroke="#222" stroke-width="1.7"/></svg>
<div class="pg" style="left:409px;top:387.7px">前往</div>
<div class="inp" style="left:422.5px;top:386.9px;width:17.9px;height:10.6px;font-size:6.2px;line-height:9.4px;text-align:center;color:#303133">4</div>
<div class="pg" style="left:443.3px;top:387.7px">页</div>
<div class="a" style="left:0;top:0;width:3px;height:3px;background:radial-gradient(circle at 3px 3px, transparent 2.2px, #fff 3px)"></div>
<div class="a" style="left:797px;top:0;width:3px;height:3px;background:radial-gradient(circle at 0 3px, transparent 2.2px, #fff 3px)"></div>
<div class="a" style="left:0;top:410px;width:2px;height:2px;background:radial-gradient(circle at 2px 0, transparent 1.4px, #fff 2px)"></div>
</body></html>
